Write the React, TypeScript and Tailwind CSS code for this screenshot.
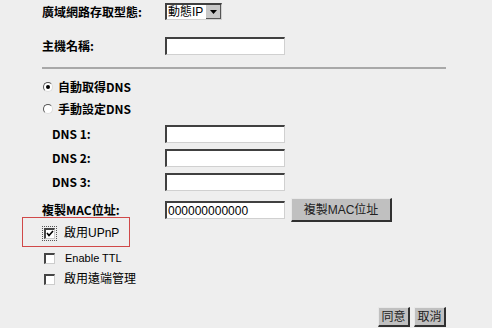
const bold = "font-bold font-['Noto_Sans_CJK_TC','Liberation_Sans',sans-serif]";

function TextBox({ value = "" }: { value?: string }) {
  return (
    <div className="w-[120px] h-[18px] bg-white border-t-2 border-l-2 border-t-[#404040] border-l-[#404040] border-r border-b border-r-[#d0d0d0] border-b-[#d0d0d0] flex items-center pl-[1px] text-[12px] leading-none">
      {value}
    </div>
  );
}

function Radio({ checked }: { checked?: boolean }) {
  return (
    <div className="w-[10px] h-[10px] rounded-full bg-white border border-t-[#555] border-l-[#555] border-r-[#ddd] border-b-[#ddd] flex items-center justify-center">
      {checked && <div className="w-[4px] h-[4px] rounded-full bg-black" />}
    </div>
  );
}

function Check({ checked, focus }: { checked?: boolean; focus?: boolean }) {
  return (
    <div className={focus ? "outline-1 outline-dotted outline-[#555] outline-offset-1" : ""}>
      <div className="w-[11px] h-[11px] bg-white border-t-2 border-l-2 border-t-[#444] border-l-[#444] border-r border-b border-r-[#ccc] border-b-[#ccc] flex items-center justify-center">
        {checked && (
          <svg width="8" height="7" viewBox="0 0 8 7">
            <path d="M1 3 L3 5.5 L7 1" stroke="#000" strokeWidth="1.6" fill="none" />
          </svg>
        )}
      </div>
    </div>
  );
}

function Btn({ children, className = "" }: { children: React.ReactNode; className?: string }) {
  return (
    <div className={`h-[20px] bg-[#c0c0c0] border-t border-l border-t-[#e8e8e8] border-l-[#e8e8e8] border-r-2 border-b-2 border-r-[#303030] border-b-[#303030] flex items-center justify-center text-[12px] text-[#222] leading-none ${className}`}>
      {children}
    </div>
  );
}

export default function App() {
  return (
    <div className="w-[492px] h-[328px] bg-[#eeeeee] overflow-hidden text-black text-[12px] font-['Liberation_Sans','Noto_Sans_CJK_TC',sans-serif]">
      <div className="pt-[3px] pl-[42px] flex flex-col">
        {/* WAN type */}
        <div className="h-[17px] flex items-center">
          <div className={`w-[123px] text-[12px] ${bold}`}>廣域網路存取型態:</div>
          <div className="w-[57px] h-[17px] bg-white border-t-2 border-l-2 border-t-[#404040] border-l-[#404040] border-r border-b border-r-[#d0d0d0] border-b-[#d0d0d0] flex items-center">
            <span className="flex-1 pl-[1px] text-[12px] leading-none">動態IP</span>
            <div className="w-[15px] h-full bg-[#c8c8c8] border-r border-b border-[#555] flex items-center justify-center">
              <svg width="7" height="4" viewBox="0 0 7 4">
                <path d="M0 0 H7 L3.5 4 Z" fill="#000" />
              </svg>
            </div>
          </div>
        </div>

        {/* host name */}
        <div className="mt-[17px] h-[17px] flex items-center">
          <div className={`w-[123px] ${bold}`}>主機名稱:</div>
          <TextBox />
        </div>

        <div className="mt-[13px] h-[2px] w-[404px] bg-[#a8a8a8]" />

        {/* DNS mode */}
        <div className="mt-[11px] h-[14px] flex items-center gap-[5px] pl-[1px]">
          <Radio checked />
          <span className={bold}>自動取得DNS</span>
        </div>
        <div className="mt-[8px] h-[14px] flex items-center gap-[5px] pl-[1px]">
          <Radio />
          <span className={bold}>手動設定DNS</span>
        </div>

        {["DNS 1:", "DNS 2:", "DNS 3:"].map((l, i) => (
          <div key={l} className={`${i === 0 ? "mt-[9px]" : "mt-[6px]"} h-[18px] flex items-center`}>
            <div className={`w-[123px] pl-[10px] ${bold}`}>{l}</div>
            <TextBox />
          </div>
        ))}

        {/* MAC clone */}
        <div className="mt-[7px] h-[24px] flex items-center">
          <div className={`w-[123px] ${bold}`}>複製MAC位址:</div>
          <TextBox value="000000000000" />
          <Btn className="ml-[6px] w-[101px] h-[24px]">複製MAC位址</Btn>
        </div>

        {/* options */}
        <div className="relative mt-[4px] h-[14px] flex items-center gap-[9px] pl-[2px]">
          <div className="absolute -top-[9px] -left-[20px] w-[108px] h-[30px] border border-[#d04848]" />
          <Check checked focus />
          <span>啟用UPnP</span>
        </div>
        <div className="mt-[11px] h-[14px] flex items-center gap-[10px] pl-[2px]">
          <Check />
          <span className="text-[11px]">Enable TTL</span>
        </div>
        <div className="mt-[7px] h-[14px] flex items-center gap-[9px] pl-[2px]">
          <Check />
          <span>啟用遠端管理</span>
        </div>

        <div className="mt-[21px] w-[404px] flex justify-end gap-[4px]">
          <Btn className="w-[32px]">同意</Btn>
          <Btn className="w-[32px]">取消</Btn>
        </div>
      </div>
    </div>
  );
}
